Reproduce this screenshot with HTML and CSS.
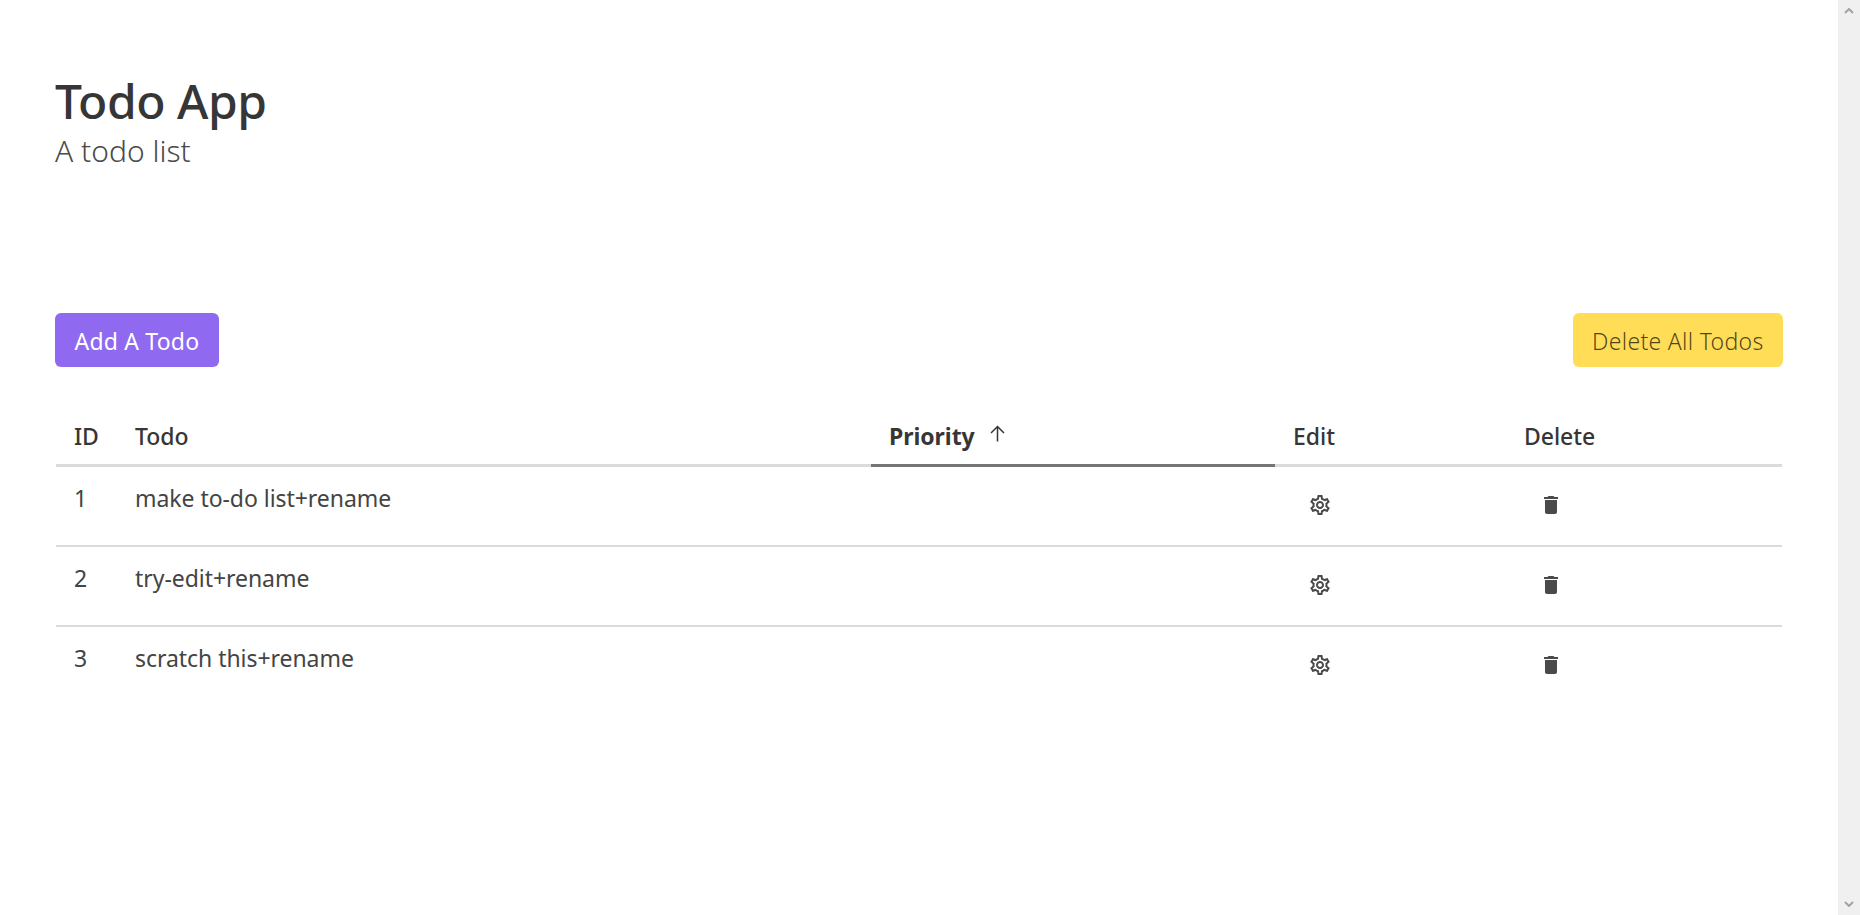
FILE: index.html
```html
<!DOCTYPE html>
<html lang="en">
<head>
  <meta charset="UTF-8" />
  <title>Todo App</title>
  <link rel="stylesheet" href="styles.css">
</head>
<body>
  <div class="page">
    <main class="content">
      <header class="hero">
        <h1 class="title">Todo App</h1>
        <p class="subtitle">A todo list</p>
      </header>

      <div class="actions">
        <button class="btn btn-add">Add A Todo</button>
        <button class="btn btn-clear">Delete All Todos</button>
      </div>

      <table class="todos">
        <thead>
          <tr>
            <th class="col-id">ID</th>
            <th class="col-todo">Todo</th>
            <th class="col-priority sorted">
              <span class="sort-label">Priority
                <svg class="sort-arrow" viewBox="0 0 15 17"><path d="M7.5 16.5V1.5M1 8L7.5 1.5 14 8" /></svg>
              </span>
            </th>
            <th class="col-edit">Edit</th>
            <th class="col-delete">Delete</th>
          </tr>
        </thead>
        <tbody>
          <tr>
            <td>1</td>
            <td class="col-todo">make to-do list+rename</td>
            <td></td>
            <td><svg class="icon-gear" viewBox="0 0 24 24"><path d="M19.43 12.98c.04-.32.07-.64.07-.98 0-.34-.03-.66-.07-.98l2.11-1.65c.19-.15.24-.42.12-.64l-2-3.46c-.09-.16-.26-.25-.44-.25-.06 0-.12.01-.17.03l-2.49 1c-.52-.4-1.08-.73-1.69-.98l-.38-2.65C14.46 2.18 14.25 2 14 2h-4c-.25 0-.46.18-.49.42l-.38 2.65c-.61.25-1.17.59-1.69.98l-2.49-1c-.06-.02-.12-.03-.18-.03-.17 0-.34.09-.43.25l-2 3.46c-.13.22-.07.49.12.64l2.11 1.65c-.04.32-.07.65-.07.98 0 .33.03.66.07.98l-2.11 1.65c-.19.15-.24.42-.12.64l2 3.46c.09.16.26.25.44.25.06 0 .12-.01.17-.03l2.49-1c.52.4 1.08.73 1.69.98l.38 2.65c.03.24.24.42.49.42h4c.25 0 .46-.18.49-.42l.38-2.65c.61-.25 1.17-.59 1.69-.98l2.49 1c.06.02.12.03.18.03.17 0 .34-.09.43-.25l2-3.46c.12-.22.07-.49-.12-.64l-2.11-1.65zm-1.98-1.71c.04.31.05.52.05.73 0 .21-.02.43-.05.73l-.14 1.13.89.7 1.08.84-.7 1.21-1.27-.51-1.04-.42-.9.68c-.43.32-.84.56-1.25.73l-1.06.43-.16 1.13-.2 1.35h-1.4l-.19-1.35-.16-1.13-1.06-.43c-.43-.18-.83-.41-1.23-.71l-.91-.7-1.06.43-1.27.51-.7-1.21 1.08-.84.89-.7-.14-1.13c-.03-.31-.05-.54-.05-.74s.02-.43.05-.73l.14-1.13-.89-.7-1.08-.84.7-1.21 1.27.51 1.04.42.9-.68c.43-.32.84-.56 1.25-.73l1.06-.43.16-1.13.2-1.35h1.39l.19 1.35.16 1.13 1.06.43c.43.18.83.41 1.23.71l.91.7 1.06-.43 1.27-.51.7 1.21-1.07.85-.89.7.14 1.13zM12 8c-2.21 0-4 1.79-4 4s1.79 4 4 4 4-1.79 4-4-1.79-4-4-4zm0 6c-1.1 0-2-.9-2-2s.9-2 2-2 2 .9 2 2-.9 2-2 2z" /></svg></td>
            <td class="col-delete"><svg class="icon-trash" viewBox="0 0 24 24"><path d="M6 19c0 1.1.9 2 2 2h8c1.1 0 2-.9 2-2V7H6v12zM19 4h-3.5l-1-1h-5l-1 1H5v2h14V4z" /></svg></td>
          </tr>
          <tr>
            <td>2</td>
            <td class="col-todo">try-edit+rename</td>
            <td></td>
            <td><svg class="icon-gear" viewBox="0 0 24 24"><path d="M19.43 12.98c.04-.32.07-.64.07-.98 0-.34-.03-.66-.07-.98l2.11-1.65c.19-.15.24-.42.12-.64l-2-3.46c-.09-.16-.26-.25-.44-.25-.06 0-.12.01-.17.03l-2.49 1c-.52-.4-1.08-.73-1.69-.98l-.38-2.65C14.46 2.18 14.25 2 14 2h-4c-.25 0-.46.18-.49.42l-.38 2.65c-.61.25-1.17.59-1.69.98l-2.49-1c-.06-.02-.12-.03-.18-.03-.17 0-.34.09-.43.25l-2 3.46c-.13.22-.07.49.12.64l2.11 1.65c-.04.32-.07.65-.07.98 0 .33.03.66.07.98l-2.11 1.65c-.19.15-.24.42-.12.64l2 3.46c.09.16.26.25.44.25.06 0 .12-.01.17-.03l2.49-1c.52.4 1.08.73 1.69.98l.38 2.65c.03.24.24.42.49.42h4c.25 0 .46-.18.49-.42l.38-2.65c.61-.25 1.17-.59 1.69-.98l2.49 1c.06.02.12.03.18.03.17 0 .34-.09.43-.25l2-3.46c.12-.22.07-.49-.12-.64l-2.11-1.65zm-1.98-1.71c.04.31.05.52.05.73 0 .21-.02.43-.05.73l-.14 1.13.89.7 1.08.84-.7 1.21-1.27-.51-1.04-.42-.9.68c-.43.32-.84.56-1.25.73l-1.06.43-.16 1.13-.2 1.35h-1.4l-.19-1.35-.16-1.13-1.06-.43c-.43-.18-.83-.41-1.23-.71l-.91-.7-1.06.43-1.27.51-.7-1.21 1.08-.84.89-.7-.14-1.13c-.03-.31-.05-.54-.05-.74s.02-.43.05-.73l.14-1.13-.89-.7-1.08-.84.7-1.21 1.27.51 1.04.42.9-.68c.43-.32.84-.56 1.25-.73l1.06-.43.16-1.13.2-1.35h1.39l.19 1.35.16 1.13 1.06.43c.43.18.83.41 1.23.71l.91.7 1.06-.43 1.27-.51.7 1.21-1.07.85-.89.7.14 1.13zM12 8c-2.21 0-4 1.79-4 4s1.79 4 4 4 4-1.79 4-4-1.79-4-4-4zm0 6c-1.1 0-2-.9-2-2s.9-2 2-2 2 .9 2 2-.9 2-2 2z" /></svg></td>
            <td class="col-delete"><svg class="icon-trash" viewBox="0 0 24 24"><path d="M6 19c0 1.1.9 2 2 2h8c1.1 0 2-.9 2-2V7H6v12zM19 4h-3.5l-1-1h-5l-1 1H5v2h14V4z" /></svg></td>
          </tr>
          <tr>
            <td>3</td>
            <td class="col-todo">scratch this+rename</td>
            <td></td>
            <td><svg class="icon-gear" viewBox="0 0 24 24"><path d="M19.43 12.98c.04-.32.07-.64.07-.98 0-.34-.03-.66-.07-.98l2.11-1.65c.19-.15.24-.42.12-.64l-2-3.46c-.09-.16-.26-.25-.44-.25-.06 0-.12.01-.17.03l-2.49 1c-.52-.4-1.08-.73-1.69-.98l-.38-2.65C14.46 2.18 14.25 2 14 2h-4c-.25 0-.46.18-.49.42l-.38 2.65c-.61.25-1.17.59-1.69.98l-2.49-1c-.06-.02-.12-.03-.18-.03-.17 0-.34.09-.43.25l-2 3.46c-.13.22-.07.49.12.64l2.11 1.65c-.04.32-.07.65-.07.98 0 .33.03.66.07.98l-2.11 1.65c-.19.15-.24.42-.12.64l2 3.46c.09.16.26.25.44.25.06 0 .12-.01.17-.03l2.49-1c.52.4 1.08.73 1.69.98l.38 2.65c.03.24.24.42.49.42h4c.25 0 .46-.18.49-.42l.38-2.65c.61-.25 1.17-.59 1.69-.98l2.49 1c.06.02.12.03.18.03.17 0 .34-.09.43-.25l2-3.46c.12-.22.07-.49-.12-.64l-2.11-1.65zm-1.98-1.71c.04.31.05.52.05.73 0 .21-.02.43-.05.73l-.14 1.13.89.7 1.08.84-.7 1.21-1.27-.51-1.04-.42-.9.68c-.43.32-.84.56-1.25.73l-1.06.43-.16 1.13-.2 1.35h-1.4l-.19-1.35-.16-1.13-1.06-.43c-.43-.18-.83-.41-1.23-.71l-.91-.7-1.06.43-1.27.51-.7-1.21 1.08-.84.89-.7-.14-1.13c-.03-.31-.05-.54-.05-.74s.02-.43.05-.73l.14-1.13-.89-.7-1.08-.84.7-1.21 1.27.51 1.04.42.9-.68c.43-.32.84-.56 1.25-.73l1.06-.43.16-1.13.2-1.35h1.39l.19 1.35.16 1.13 1.06.43c.43.18.83.41 1.23.71l.91.7 1.06-.43 1.27-.51.7 1.21-1.07.85-.89.7.14 1.13zM12 8c-2.21 0-4 1.79-4 4s1.79 4 4 4 4-1.79 4-4-1.79-4-4-4zm0 6c-1.1 0-2-.9-2-2s.9-2 2-2 2 .9 2 2-.9 2-2 2z" /></svg></td>
            <td class="col-delete"><svg class="icon-trash" viewBox="0 0 24 24"><path d="M6 19c0 1.1.9 2 2 2h8c1.1 0 2-.9 2-2V7H6v12zM19 4h-3.5l-1-1h-5l-1 1H5v2h14V4z" /></svg></td>
          </tr>
        </tbody>
      </table>
    </main>

    <div class="scrollbar">
      <svg class="scroll-arrow" viewBox="0 0 10 6"><path d="M1 5l4-4 4 4" /></svg>
      <svg class="scroll-arrow" viewBox="0 0 10 6"><path d="M1 1l4 4 4-4" /></svg>
    </div>
  </div>
</body>
</html>
```

FILE: styles.css
```css
html, body {
  margin: 0;
  padding: 0;
  height: 100%;
  overflow: hidden;
  background: #fff;
  color: #363636;
  font-family: "Noto Sans", "Open Sans", sans-serif;
}
.page {
  display: flex;
  height: 915px;
}
.content {
  flex: 1;
  padding: 71px 55px 0;
  min-width: 0;
}
.scrollbar {
  width: 22px;
  background: #f0f0f0;
  display: flex;
  flex-direction: column;
  justify-content: space-between;
  align-items: center;
  padding: 8px 0;
  box-sizing: border-box;
}
.scroll-arrow {
  width: 10px;
  height: 6px;
  fill: none;
  stroke: #a3a3a3;
  stroke-width: 2;
}

.hero {
  height: 242px;
}
.title {
  margin: 0;
  font-size: 48px;
  font-weight: 500;
  line-height: 60px;
  letter-spacing: -0.5px;
  color: #363636;
}
.subtitle {
  margin: 0;
  font-size: 30px;
  font-weight: 300;
  line-height: 40px;
  color: #4a4a4a;
}

.actions {
  display: flex;
  justify-content: space-between;
  margin-bottom: 43px;
}
.btn {
  height: 54px;
  padding: 1px 19.5px 0;
  border: none;
  border-radius: 6px;
  font-family: inherit;
  font-size: 23px;
}
.btn-add {
  background: #8f69f0;
  color: #fff;
  letter-spacing: 0.2px;
}
.btn-clear {
  background: #ffdd57;
  color: rgba(0, 0, 0, 0.7);
  font-weight: 300;
  letter-spacing: 0.3px;
}

.todos {
  width: 1726px;
  margin: 0 1px;
  border-collapse: separate;
  border-spacing: 0;
  table-layout: fixed;
  font-size: 23px;
  letter-spacing: -0.05px;
}
.col-id { width: 60px; }
.col-todo { width: 755px; }
.col-priority { width: 404px; }
.col-edit { width: 230px; }
.todos th {
  height: 57px;
  padding: 0 0 2px 18px;
  box-sizing: border-box;
  text-align: left;
  font-weight: 500;
  border-bottom: 3px solid #dbdbdb;
}
.todos th.sorted {
  font-weight: 700;
  border-bottom-color: #757575;
}
.sort-label {
  display: flex;
  align-items: center;
  gap: 15px;
}
.sort-arrow {
  width: 15px;
  height: 17px;
  fill: none;
  stroke: #363636;
  stroke-width: 1.5;
  margin-top: -6px;
}
.todos td {
  height: 80px;
  padding: 0 0 0 18px;
  box-sizing: border-box;
  border-bottom: 2px solid #dbdbdb;
  vertical-align: top;
  line-height: 63px;
  color: #444;
}
.todos th.col-todo,
.todos td.col-todo,
.todos th.col-delete,
.todos td.col-delete {
  padding-left: 19px;
}
.todos tr:last-child td {
  border-bottom: none;
}
.icon-gear {
  display: block;
  width: 24px;
  height: 24px;
  margin: 26px 0 0 15px;
  fill: #4a4a4a;
}
.icon-trash {
  display: block;
  width: 24px;
  height: 24px;
  margin: 26px 0 0 15px;
  fill: #4a4a4a;
}
```
